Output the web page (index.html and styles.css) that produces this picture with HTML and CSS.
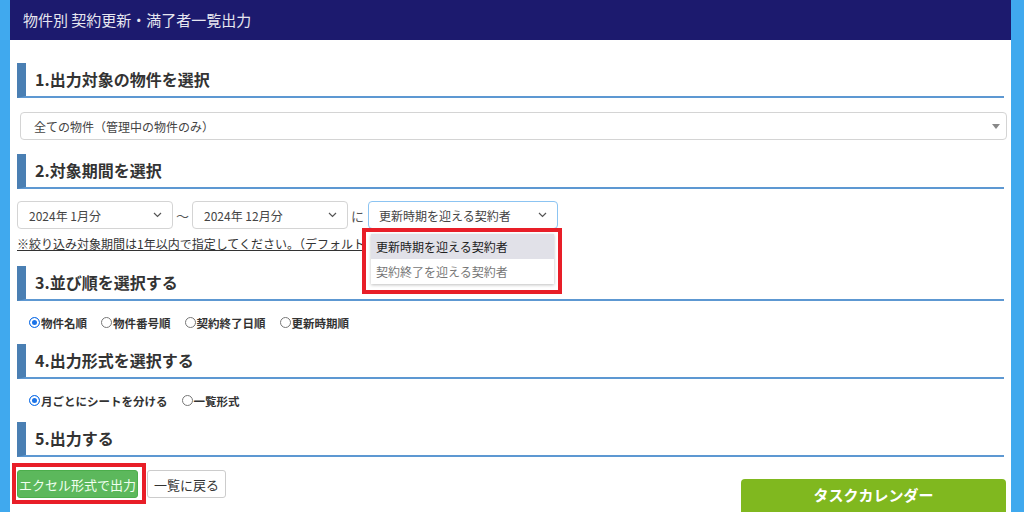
FILE: index.html
```html
<!DOCTYPE html>
<html lang="ja">
<head>
    <meta charset="UTF-8">
    <title>物件別 契約更新・満了者一覧出力</title>
    <link rel="stylesheet" href="styles.css">
</head>
<body>
    <div id="page">
        <div id="pageHeader">物件別 契約更新・満了者一覧出力</div>

        <div id="pageBody">
            <h2 class="section-title first">1.出力対象の物件を選択</h2>
            <div class="select-box wide">
                <span>全ての物件（管理中の物件のみ）</span>
                <span class="tri"></span>
            </div>

            <h2 class="section-title">2.対象期間を選択</h2>
            <div class="period-row">
                <div class="select-box month">
                    <span>2024年 1月分</span>
                    <svg class="chev" width="9" height="6" viewBox="0 0 9 6"><path d="M1 1l3.5 3.5L8 1" fill="none" stroke="#555" stroke-width="1.2"/></svg>
                </div>
                <span class="sep">～</span>
                <div class="select-box month">
                    <span>2024年 12月分</span>
                    <svg class="chev" width="9" height="6" viewBox="0 0 9 6"><path d="M1 1l3.5 3.5L8 1" fill="none" stroke="#555" stroke-width="1.2"/></svg>
                </div>
                <span class="sep">に</span>
                <div class="select-wrap">
                    <div class="select-box target focused">
                        <span>更新時期を迎える契約者</span>
                        <svg class="chev" width="9" height="6" viewBox="0 0 9 6"><path d="M1 1l3.5 3.5L8 1" fill="none" stroke="#555" stroke-width="1.2"/></svg>
                    </div>
                    <!-- open dropdown, marked up with red frame -->
                    <div class="dropdown-mark">
                        <ul class="dropdown">
                            <li class="selected">更新時期を迎える契約者</li>
                            <li>契約終了を迎える契約者</li>
                        </ul>
                    </div>
                </div>
            </div>
            <p class="note">※絞り込み対象期間は1年以内で指定してください。（デフォルト</p>

            <h2 class="section-title">3.並び順を選択する</h2>
            <div class="radio-row">
                <label class="radio"><span class="dot checked"></span>物件名順</label>
                <label class="radio"><span class="dot"></span>物件番号順</label>
                <label class="radio"><span class="dot"></span>契約終了日順</label>
                <label class="radio"><span class="dot"></span>更新時期順</label>
            </div>

            <h2 class="section-title">4.出力形式を選択する</h2>
            <div class="radio-row">
                <label class="radio"><span class="dot checked"></span>月ごとにシートを分ける</label>
                <label class="radio"><span class="dot"></span>一覧形式</label>
            </div>

            <h2 class="section-title">5.出力する</h2>
            <div class="button-row">
                <div class="btn-mark">
                    <button class="btn btn-green">エクセル形式で出力</button>
                </div>
                <button class="btn btn-white">一覧に戻る</button>
                <button class="btn-calendar">タスクカレンダー</button>
            </div>
        </div>
    </div>
</body>
</html>
```

FILE: styles.css
```css
* {
    margin: 0;
    padding: 0;
    box-sizing: border-box;
}

body {
    background-color: #40a9ee;
    color: #333;
    font-family: "Noto Sans CJK JP", "Noto Sans", sans-serif;
    height: 512px;
    overflow: hidden;
}

#page {
    width: 1001px;
    height: 512px;
    margin-left: 10px;
    background: #fff;
}

#pageHeader {
    height: 40px;
    background: #1c1a6e;
    color: #e6e6f0;
    font-size: 15px;
    line-height: 40px;
    padding-left: 13px;
}

#pageBody {
    padding: 0 7px;
}

.section-title {
    height: 35px;
    border-left: 9px solid #4a7fb3;
    border-bottom: 2px solid #5d98d2;
    font-size: 16px;
    font-weight: bold;
    line-height: 33px;
    padding-left: 9px;
    margin-top: 14px;
    color: #333;
}

.section-title.first {
    margin-top: 23px;
}

.select-box {
    height: 28px;
    border: 1px solid #d4d4d4;
    border-radius: 4px;
    background: #fff;
    font-size: 12px;
    color: #444;
    display: flex;
    align-items: center;
    justify-content: space-between;
    padding: 0 10px 0 13px;
}

.select-box.wide {
    margin: 14px -3px 0 3px;
    padding-left: 13px;
    padding-right: 6px;
}

.tri {
    width: 0;
    height: 0;
    border-left: 4px solid transparent;
    border-right: 4px solid transparent;
    border-top: 5px solid #888;
}

.period-row {
    display: flex;
    align-items: center;
    margin-top: 12px;
}

.select-box.month {
    width: 156px;
    padding-left: 11px;
}

.select-box.target {
    width: 190px;
    padding-left: 10px;
}

.select-box.focused {
    border-color: #8cc4f2;
}

.sep {
    font-size: 13px;
    color: #555;
    padding: 0 3px;
}

.select-wrap {
    position: relative;
    margin-left: 1px;
}

.dropdown-mark {
    position: absolute;
    top: 27px;
    left: -6px;
    width: 200px;
    height: 66px;
    border: 4px solid #e81e28;
    z-index: 5;
}

.dropdown {
    list-style: none;
    background: #fff;
    margin: 2px 4px 0 5px;
    box-shadow: 0 1px 3px rgba(0, 0, 0, 0.25);
    padding: 0;
}

.dropdown li {
    height: 25px;
    line-height: 25px;
    font-size: 12px;
    padding-left: 5px;
    color: #777;
}

.dropdown li.selected {
    background: #e1e1e8;
    color: #222;
}

.note {
    font-size: 12px;
    text-decoration: underline;
    color: #333;
    margin-top: 6px;
    white-space: nowrap;
}

.radio-row {
    display: flex;
    gap: 14px;
    margin: 14px 0 0 12px;
    height: 15px;
}

.radio {
    display: flex;
    align-items: center;
    font-size: 11.5px;
    font-weight: bold;
    color: #333;
}

.dot {
    width: 11px;
    height: 11px;
    border-radius: 50%;
    border: 1px solid #777;
    background: #fff;
    margin-right: 1px;
}

.dot.checked {
    border: 1px solid #1a73e8;
    background: #1a73e8;
    box-shadow: inset 0 0 0 2px #fff;
}

.button-row {
    display: flex;
    align-items: flex-start;
    margin-top: 6px;
    margin-left: -5px;
}

.btn-mark {
    border: 4px solid #e81e28;
    padding: 3px 4px 2px 1px;
}

.btn {
    height: 28px;
    font-family: inherit;
    font-size: 13px;
    border-radius: 3px;
    cursor: pointer;
}

.btn-green {
    width: 121px;
    background: #5cb85c;
    border: 1px solid #4cae4c;
    color: #f0fff0;
}

.btn-white {
    width: 79px;
    margin-top: 7px;
    margin-left: 1px;
    background: #fff;
    border: 1px solid #ccc;
    color: #333;
}

.btn-calendar {
    margin-left: auto;
    margin-top: 16px;
    width: 265px;
    height: 40px;
    background: #80b81f;
    border: none;
    border-radius: 4px 4px 0 0;
    color: #fff;
    font-family: inherit;
    font-size: 15px;
    font-weight: bold;
    padding-bottom: 10px;
    margin-right: -2px;
}
```
